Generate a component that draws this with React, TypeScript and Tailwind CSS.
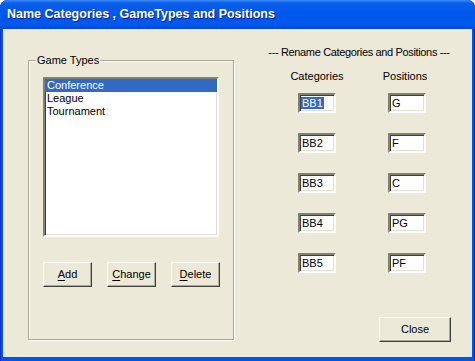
const font = "font-['Liberation_Sans','Arial',sans-serif]";

const sunken =
  "border-2 border-t-[#828073] border-l-[#828073] border-b-white border-r-white shadow-[inset_1px_1px_0_#404040,inset_-1px_-1px_0_#e3e0d0]";

const raised =
  "border border-t-white border-l-white border-b-[#404040] border-r-[#404040] shadow-[inset_-1px_-1px_0_#aca899] bg-[#ece9d8]";

function Btn({ hot, rest, className }: { hot?: string; rest: string; className?: string }) {
  return (
    <button
      type="button"
      className={`${raised} ${className ?? ""} flex items-center justify-center text-[11px] font-normal text-black`}
    >
      {hot ? <span className="underline underline-offset-2">{hot}</span> : null}
      {rest}
    </button>
  );
}

function Field({ value, selected }: { value: string; selected?: boolean }) {
  return (
    <div className={`${sunken} h-[20px] w-[38px] bg-white pl-[1px] text-[11px] leading-[16px] text-black`}>
      {selected ? <span className="bg-[#316ac5] px-[1px] text-white">{value}</span> : <span className="px-[1px]">{value}</span>}
    </div>
  );
}

const categories = ["BB1", "BB2", "BB3", "BB4", "BB5"];
const positions = ["G", "F", "C", "PG", "PF"];
const gameTypes = ["Conference", "League", "Tournament"];

export default function App() {
  return (
    <div className={`${font} h-[361px] w-[475px] overflow-hidden`}>
      <div className="flex h-full w-full flex-col rounded-t-[8px] bg-[#0055e5] shadow-[inset_1px_0_0_#0831d9,inset_-1px_0_0_#001ea0]">
        {/* title bar */}
        <div className="flex h-[29px] items-center rounded-t-[8px] bg-[linear-gradient(to_bottom,#3d8cf8_0%,#0a5fea_10%,#0056e8_45%,#0058ee_85%,#0047d8_100%)] pl-[7px]">
          <span className="whitespace-nowrap text-[12.5px] font-bold text-white [text-shadow:1px_1px_0_#0a1e8a]">
            Name Categories , GameTypes and Positions
          </span>
        </div>

        {/* client area */}
        <div className="mx-[3px] mb-[4px] flex flex-1 bg-[#ece9d8]">
          {/* Game Types group */}
          <div className="relative ml-[25px] mt-[31px] h-[280px] w-[206px] border border-[#aca899] shadow-[inset_1px_1px_0_#fff,1px_1px_0_#fff]">
            <span className="absolute left-[7px] top-[-8px] bg-[#ece9d8] px-[1px] text-[11px] leading-[14px] text-black">
              Game Types
            </span>
            <div className="ml-[14px] mt-[16px] flex w-[177px] flex-col">
              <div className={`${sunken} h-[160px] w-[176px] bg-white`}>
                {gameTypes.map((g, i) => (
                  <div
                    key={g}
                    className={`h-[13px] pl-[2px] text-[11px] leading-[13px] ${
                      i === 0 ? "bg-[#316ac5] text-white" : "text-black"
                    }`}
                  >
                    {g}
                  </div>
                ))}
              </div>
              <div className="mt-[25px] flex justify-between">
                <Btn hot="A" rest="dd" className="h-[25px] w-[49px]" />
                <Btn hot="C" rest="hange" className="h-[25px] w-[49px]" />
                <Btn hot="D" rest="elete" className="h-[25px] w-[49px]" />
              </div>
            </div>
          </div>

          {/* rename section */}
          <div className="ml-[30px] flex w-[190px] flex-col">
            <div className="mt-[17px] w-[190px] whitespace-nowrap text-center text-[11px] leading-[13px] tracking-[-0.35px] text-black">
              --- Rename Categories and Positions ---
            </div>
            <div className="mt-[11px] grid grid-cols-[106px_70px]">
              <div className="flex flex-col items-center">
                <div className="text-[11px] leading-[13px] text-black">Categories</div>
                <div className="mt-[10px] flex flex-col gap-[20px]">
                  {categories.map((c, i) => (
                    <Field key={c} value={c} selected={i === 0} />
                  ))}
                </div>
              </div>
              <div className="flex flex-col items-center">
                <div className="text-[11px] leading-[13px] text-black">Positions</div>
                <div className="mt-[10px] flex flex-col gap-[20px] pl-[4px]">
                  {positions.map((p) => (
                    <Field key={p} value={p} />
                  ))}
                </div>
              </div>
            </div>
            <div className="ml-[115px] mt-[44px]">
              <Btn rest="Close" className="h-[25px] w-[72px]" />
            </div>
          </div>
        </div>
      </div>
    </div>
  );
}
